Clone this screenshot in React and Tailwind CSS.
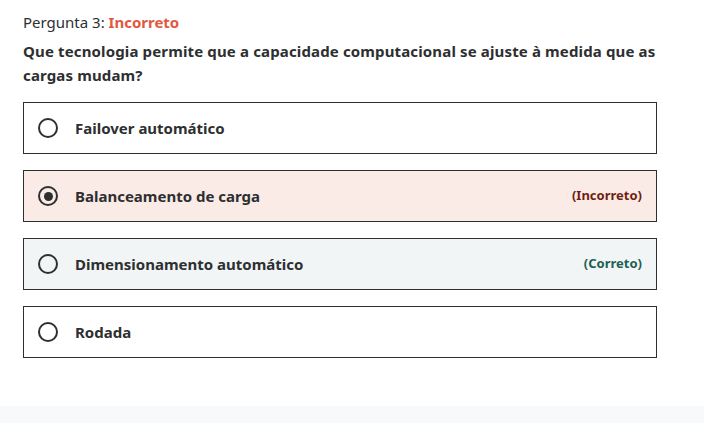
const options = [
  { label: "Failover automático", state: null, checked: false },
  { label: "Balanceamento de carga", state: "incorrect", checked: true },
  { label: "Dimensionamento automático", state: "correct", checked: false },
  { label: "Rodada", state: null, checked: false },
];

const Radio = ({ checked }) => (
  <span className="w-5 h-5 rounded-full border-2 border-[#2d2f31] flex items-center justify-center shrink-0">
    {checked && <span className="w-[9px] h-[9px] rounded-full bg-[#2d2f31]" />}
  </span>
);

const Option = ({ label, state, checked }) => {
  const bg =
    state === "incorrect"
      ? "bg-[#fbebe7]"
      : state === "correct"
      ? "bg-[#f2f5f5]"
      : "bg-white";
  return (
    <div
      className={`h-[52px] border border-[#2d2f31] flex items-center pl-[14px] pr-[14px] ${bg}`}
    >
      <Radio checked={checked} />
      <span className="ml-[17px] text-[15px] font-bold text-[#2d2f31]">{label}</span>
      {state === "incorrect" && (
        <span className="ml-auto text-[13px] font-bold text-[#6f1f12]">(Incorreto)</span>
      )}
      {state === "correct" && (
        <span className="ml-auto text-[13px] font-bold text-[#1e6055]">(Correto)</span>
      )}
    </div>
  );
};

export default function App() {
  return (
    <div
      className="w-[704px] h-[423px] bg-white flex flex-col text-[#2d2f31]"
      style={{ fontFamily: '"Noto Sans", sans-serif' }}
    >
      <div className="flex-1 pl-[23px] pr-[47px] pt-[10px]">
        <div className="text-[15px] leading-6">
          Pergunta 3: <span className="font-bold text-[#e2583e]">Incorreto</span>
        </div>
        <div className="mt-[5px] text-[15px] font-bold leading-6 tracking-[0.14px]">
          Que tecnologia permite que a capacidade computacional se ajuste à medida que as
          cargas mudam?
        </div>
        <div className="mt-[15px] flex flex-col gap-4">
          {options.map((o) => (
            <Option key={o.label} {...o} />
          ))}
        </div>
      </div>
      <div className="h-[17px] bg-[#f7f9fa]" />
    </div>
  );
}
